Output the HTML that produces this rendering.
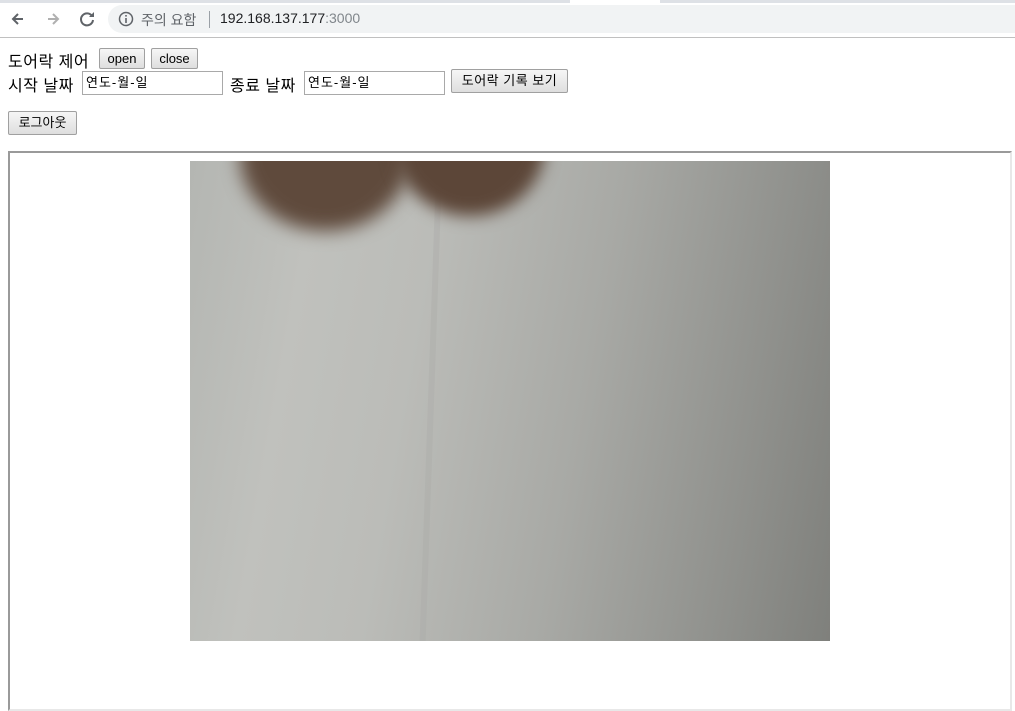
<!DOCTYPE html>
<html><head><meta charset="utf-8"><style>
body{margin:0;width:1015px;height:695px;overflow:hidden;background:#fff;font-family:"Liberation Sans","Noto Sans CJK KR",sans-serif;position:relative}
.a{position:absolute}
.btn{position:absolute;background:linear-gradient(#f6f6f6,#dedede);border:1px solid #a0a0a0;border-radius:2px;font-size:13px;color:#000;text-align:center;box-sizing:border-box;line-height:19px}
.inp{position:absolute;border:1px solid #a9a9a9;box-sizing:border-box;height:24px;font-size:13px;line-height:22px;padding-left:3px;width:141px;letter-spacing:1px}
.t{position:absolute;font-size:16px;color:#000;white-space:nowrap;letter-spacing:0.5px}
</style></head><body>
<div class="a" style="left:0;top:0;width:1015px;height:3px;background:#dee1e6"></div>
<div class="a" style="left:570px;top:0;width:90px;height:3px;background:#fff"></div>
<div class="a" style="left:0;top:37px;width:1015px;height:1px;background:#c0c0c0"></div>
<svg class="a" style="left:10px;top:9px" width="90" height="20">
<path d="M13 10H4M8 5L3 10l5 5" stroke="#5f6368" stroke-width="2" fill="none"/>
<path d="M38 10h9M43 5l5 5-5 5" stroke="#b0b0b0" stroke-width="2" fill="none"/>
<path d="M82 7a6 6 0 1 0 1 4" stroke="#5f6368" stroke-width="2" fill="none"/><path d="M84 3v5h-5z" fill="#5f6368"/>
</svg>
<div class="a" style="left:108px;top:5px;width:920px;height:28px;border-radius:14px;background:#f1f3f4"></div>
<svg class="a" style="left:118px;top:11px" width="16" height="16"><circle cx="8" cy="8" r="6.5" stroke="#5f6368" stroke-width="1.5" fill="none"/><rect x="7.2" y="7" width="1.6" height="5" fill="#5f6368"/><rect x="7.2" y="4" width="1.6" height="1.6" fill="#5f6368"/></svg>
<div class="t" style="left:141px;top:10px;font-size:14px;color:#5f6368;letter-spacing:0">주의 요함</div>
<div class="a" style="left:209px;top:11px;width:1px;height:17px;background:#9aa0a6"></div>
<div class="t" style="left:220px;top:10px;font-size:14px;color:#202124;letter-spacing:0">192.168.137.177<span style="color:#80868b">:3000</span></div>
<div class="t" style="left:8px;top:48px">도어락 제어</div>
<div class="btn" style="left:99px;top:48px;width:46px;height:21px">open</div>
<div class="btn" style="left:151px;top:48px;width:47px;height:21px">close</div>
<div class="t" style="left:8px;top:72px">시작 날짜</div>
<div class="inp" style="left:82px;top:71px">연도-월-일</div>
<div class="t" style="left:230px;top:72px">종료 날짜</div>
<div class="inp" style="left:304px;top:71px">연도-월-일</div>
<div class="btn" style="left:451px;top:69px;width:117px;height:24px;line-height:22px;letter-spacing:0.5px">도어락 기록 보기</div>
<div class="btn" style="left:8px;top:111px;width:69px;height:24px;line-height:22px">로그아웃</div>
<div class="a" style="left:8px;top:151px;width:1004px;height:560px;border:2px solid;border-color:#9a9a9a #e8e8e8 #e8e8e8 #9a9a9a;box-sizing:border-box"></div>
<div class="a" style="left:190px;top:161px;width:640px;height:480px;overflow:hidden;background:linear-gradient(100deg,#b4b6b2 0%,#c0c1bd 18%,#bbbcb8 35%,#a8a9a5 60%,#8f908c 85%,#7f807c 100%)">
<div class="a" style="left:238px;top:0;width:6px;height:480px;background:#a9a9a5;opacity:.35;transform:skewX(-2deg)"></div>
<div class="a" style="left:50px;top:-80px;width:170px;height:150px;border-radius:50%;background:#5f4a3c;filter:blur(9px)"></div>
<div class="a" style="left:205px;top:-85px;width:150px;height:140px;border-radius:50%;background:#5c4638;filter:blur(8px)"></div>
</div>
</body></html>
